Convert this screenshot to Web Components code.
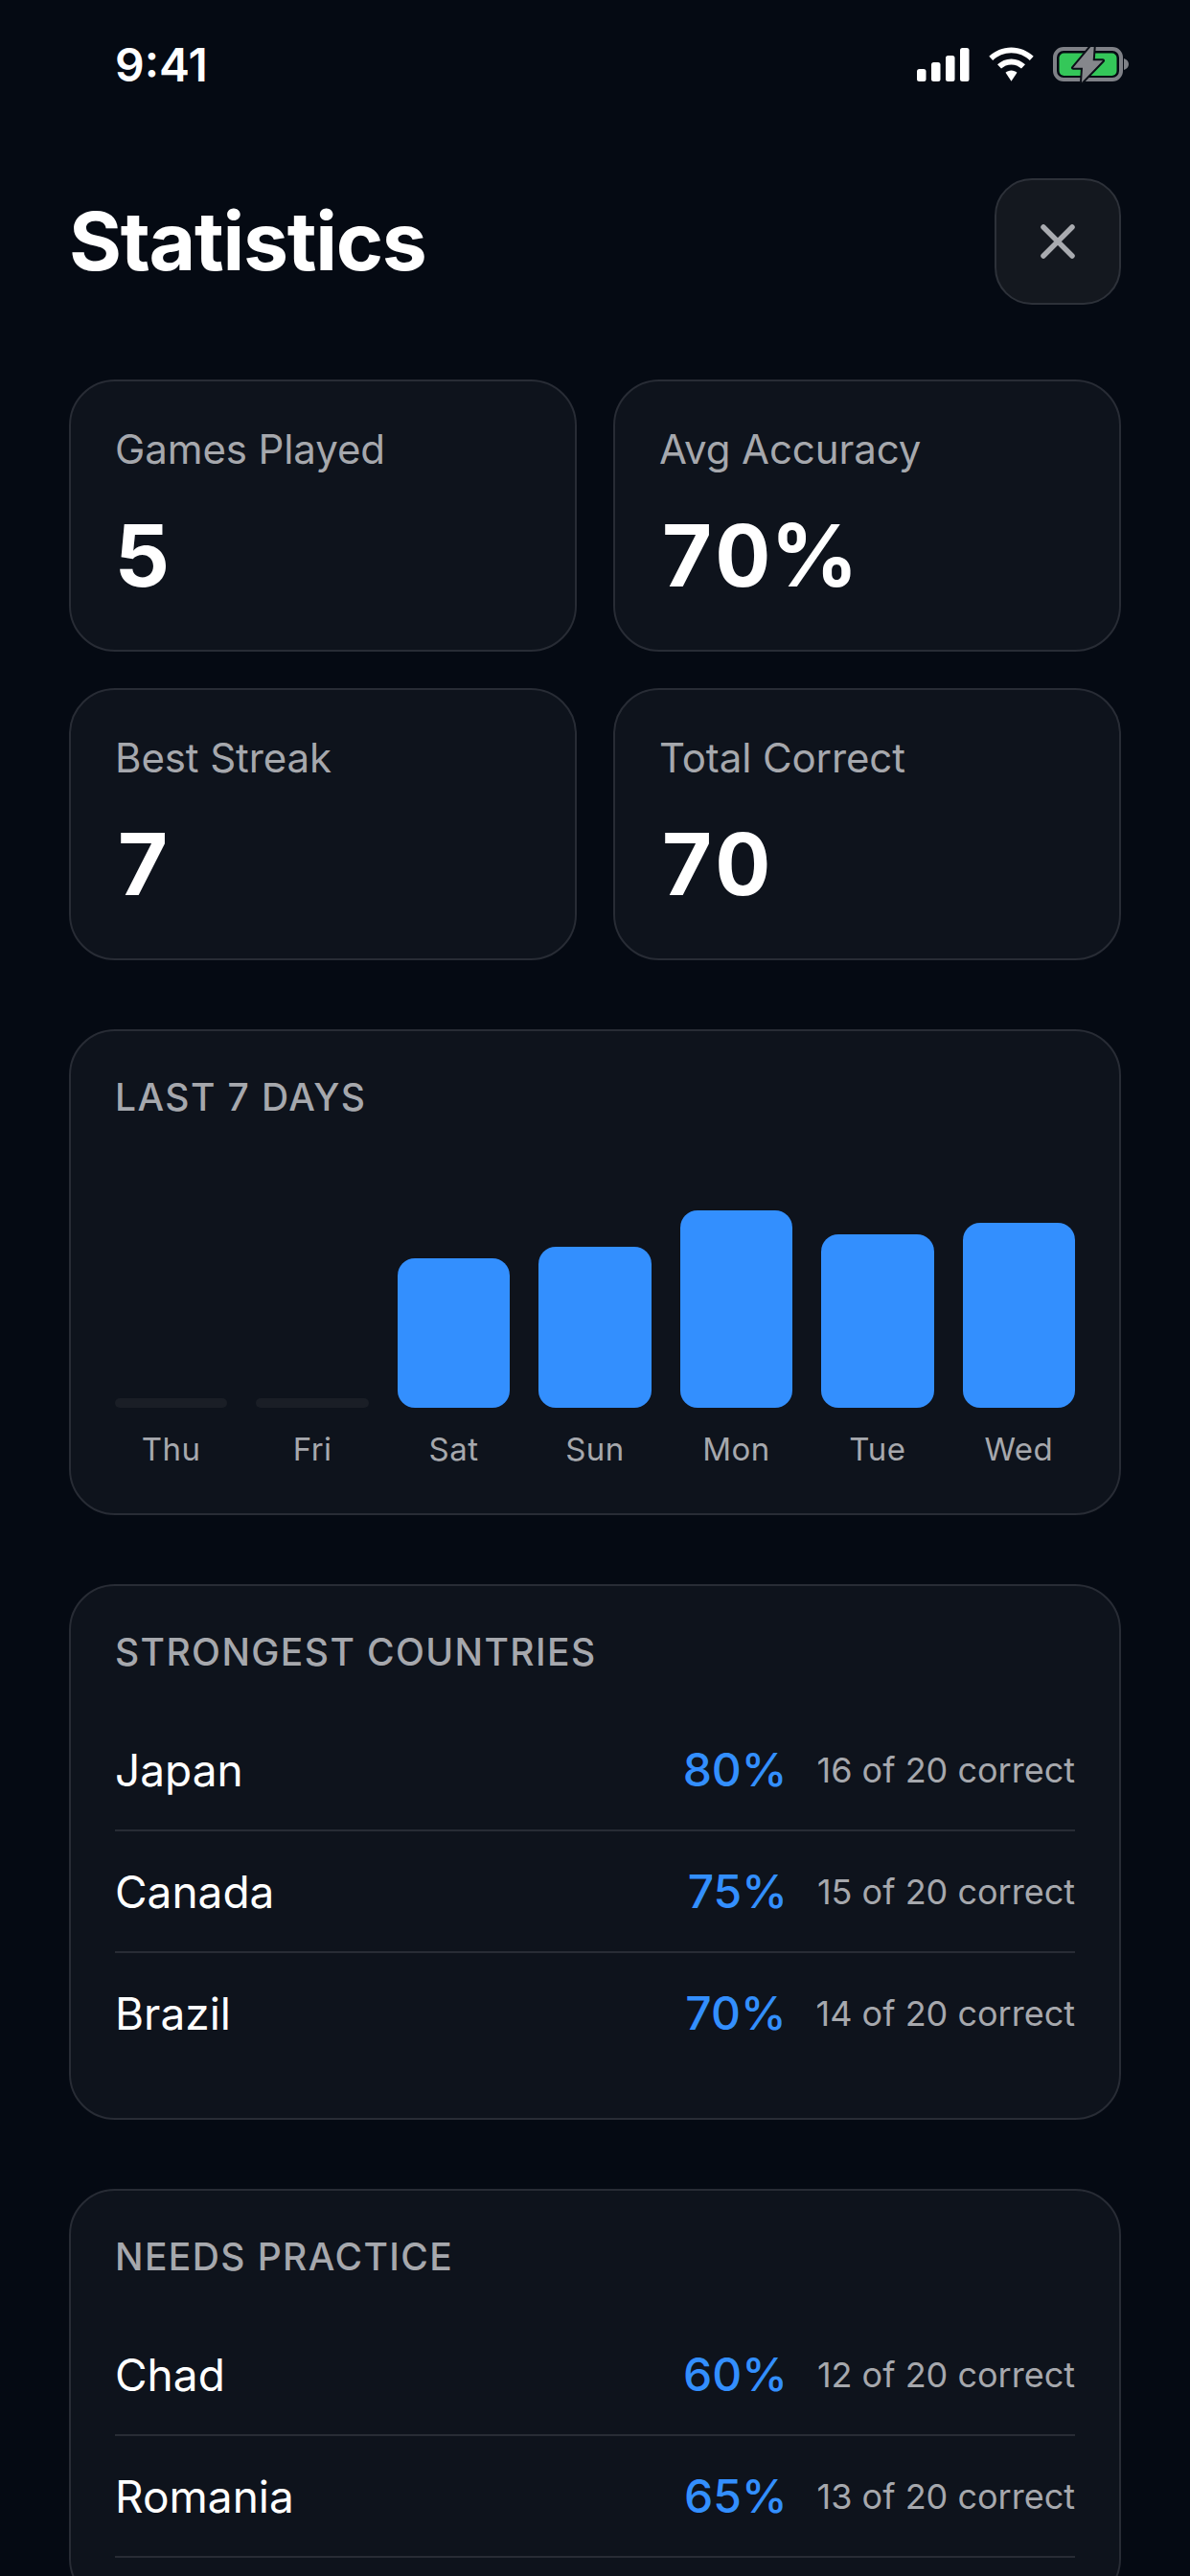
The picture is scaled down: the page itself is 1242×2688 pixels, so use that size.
<!DOCTYPE html>
<html lang="en"><head><meta charset="utf-8"><title>Statistics</title>
<style>
html,body{margin:0;height:2688px;overflow:hidden;background:#050a13;}
body{font-family:Inter,"Liberation Sans",sans-serif;color:#fff;}
stats-screen{height:2688px;overflow:hidden;}
</style></head><body>
<stats-screen>
  <status-bar></status-bar>
  <screen-header>Statistics</screen-header>
  <stat-grid>
    <stat-card label="Games Played" value="5"></stat-card>
    <stat-card label="Avg Accuracy" value="70%"></stat-card>
    <stat-card label="Best Streak" value="7"></stat-card>
    <stat-card label="Total Correct" value="70"></stat-card>
  </stat-grid>
  <chart-card title="LAST 7 DAYS">
    <day-bar day="Thu" empty></day-bar>
    <day-bar day="Fri" empty></day-bar>
    <day-bar day="Sat" h="156"></day-bar>
    <day-bar day="Sun" h="168"></day-bar>
    <day-bar day="Mon" h="206"></day-bar>
    <day-bar day="Tue" h="181"></day-bar>
    <day-bar day="Wed" h="193"></day-bar>
  </chart-card>
  <list-card heading="STRONGEST COUNTRIES">
    <country-row name="Japan" pct="80%" detail="16 of 20 correct"></country-row>
    <country-row name="Canada" pct="75%" detail="15 of 20 correct"></country-row>
    <country-row name="Brazil" pct="70%" detail="14 of 20 correct" last></country-row>
  </list-card>
  <list-card heading="NEEDS PRACTICE">
    <country-row name="Chad" pct="60%" detail="12 of 20 correct"></country-row>
    <country-row name="Romania" pct="65%" detail="13 of 20 correct"></country-row>
  </list-card>
</stats-screen>
<script>
function def(name, css, html){
  customElements.define(name, class extends HTMLElement{
    connectedCallback(){
      if(this.shadowRoot) return;
      const a=k=>this.getAttribute(k)||'';
      const r=this.attachShadow({mode:'open'});
      r.innerHTML='<style>'+css+'</style>'+html(a,this);
    }
  });
}
const cardCss=':host{display:block;box-sizing:border-box;background:#0e131c;border:2px solid #282c35;border-radius:48px;}';
const headCss='font:500 39px/46px Inter,sans-serif;letter-spacing:1.4px;color:#a6a8ad;';
def('stats-screen',':host{display:flex;flex-direction:column;padding:0 72px;box-sizing:border-box;}::slotted(*){flex-shrink:0}',()=>'<slot></slot>');
def('status-bar',`:host{display:flex;justify-content:space-between;align-items:flex-start;height:38px;margin-top:49px;padding:0 0 0 48px;margin-right:-8px;}
.t{font:600 48px/36px Inter,sans-serif;color:#fff;padding-top:1px}
.i{display:flex;align-items:flex-start;gap:20px}svg{display:block}`,()=>`<span class="t">9:41</span><span class="i">
<svg width="55" height="36" viewBox="0 0 55 36" style="margin-top:1px"><g fill="#fff"><rect x="0" y="22" width="9.5" height="13" rx="2.5"/><rect x="15" y="15" width="9.5" height="20" rx="2.5"/><rect x="30" y="8" width="9.5" height="27" rx="2.5"/><rect x="45" y="0" width="9.5" height="35" rx="2.5"/></g></svg>
<svg width="47" height="36" viewBox="0 0 48 36"><path d="M24 0C14.600 0 6.500 3.700 0.300 9.600L4.300 14C9.500 9.100 16.300 6.100 24 6.100S38.500 9.100 43.700 14L47.700 9.600C41.500 3.700 33.400 0 24 0Z" fill="#fff"/><path d="M24 12.300C18.300 12.300 13.200 14.500 9.200 18.300L13.300 22.700C16.100 20 19.800 18.400 24 18.400S31.900 20 34.700 22.700L38.800 18.300C34.800 14.500 29.700 12.300 24 12.300Z" fill="#fff"/><path d="M24 24.600C21.600 24.600 19.500 25.500 17.900 27L24 36 30.100 27C28.500 25.500 26.400 24.600 24 24.600Z" fill="#fff"/></svg>
<svg width="79" height="38" viewBox="0 0 79 38"><rect x="2" y="2" width="69" height="32" rx="9" fill="none" stroke="#7f8187" stroke-width="4"/><rect x="6.500" y="6.500" width="60" height="23.500" rx="5" fill="#34c759"/><path d="M74 12v12c3-1 5-3 5-6S77 13 74 12Z" fill="#7f8187"/><path d="M39.300 0 21 21.700H31L30 37 52 14.300H41.700L42.700 0Z" fill="#85878c" stroke="#0b0f17" stroke-width="4" stroke-linejoin="round" paint-order="stroke"/></svg>
</span>`);
def('screen-header',`:host{display:flex;justify-content:space-between;align-items:center;margin-top:99px;height:132px}
h1{margin:0;font:700 84px/1 Inter,sans-serif;letter-spacing:-1.3px;color:#fff}
button{box-sizing:border-box;width:132px;height:132px;padding:0;display:flex;align-items:center;justify-content:center;background:#14181f;border:2px solid #2d3139;border-radius:39px}`,()=>`<h1><slot></slot></h1><button aria-label="Close"><svg width="36" height="36" viewBox="0 0 36 36"><path d="M3 3 33 33M33 3 3 33" stroke="#a9abb0" stroke-width="5.500" stroke-linecap="round"/></svg></button>`);
def('stat-grid',':host{display:grid;grid-template-columns:1fr 1fr;gap:38px;margin-top:78px}',()=>'<slot></slot>');
def('stat-card',cardCss+`:host{height:284px;padding:45px 46px 0}
.l{font:400 42px/52px Inter,sans-serif;letter-spacing:-.1px;color:#a6a8ad}.v{font:700 90px/100px Inter,sans-serif;font-variant-numeric:tabular-nums;color:#fff;margin-top:35px}`,a=>`<div class="l">${a('label')}</div><div class="v">${a('value')}</div>`);
def('chart-card',cardCss+`:host{height:507px;padding:46px 46px 0;margin-top:72px}
.h{${headCss}}.c{display:grid;grid-template-columns:repeat(7,1fr);column-gap:30px;margin-top:61px}`,a=>`<div class="h">${a('title')}</div><div class="c"><slot></slot></div>`);
def('day-bar',`:host{display:flex;flex-direction:column;justify-content:flex-end;height:305px;box-sizing:border-box}
.b{background:#338ffe;border-radius:18px}.b.e{background:#1a1e26;border-radius:5px}
.d{font:400 33px/44px Inter,sans-serif;letter-spacing:.5px;color:#a6a8ad;text-align:center;margin-top:21px}`,(a,el)=>{const e=el.hasAttribute('empty');return `<div class="b${e?' e':''}" style="height:${e?10:a('h')}px"></div><div class="d">${a('day')}</div>`});
def('list-card',cardCss+`:host{padding:46px 46px 47px;margin-top:72px}
.h{${headCss}margin-bottom:37px}`,a=>`<div class="h">${a('heading')}</div><slot></slot>`);
def('country-row',`:host{display:flex;align-items:center;height:125px;border-bottom:2px solid #282c35;box-sizing:content-box}
:host([last]){border-bottom:none}
.n{font:400 46px/1 Inter,sans-serif;color:#fff;flex:1}.p{font:550 48px/1 Inter,sans-serif;color:#338ffe}.s{font:400 36px/1 Inter,sans-serif;color:#a6a8ad;margin-left:31px}`,a=>`<span class="n">${a('name')}</span><span class="p">${a('pct')}</span><span class="s">${a('detail')}</span>`);
</script></body></html>
